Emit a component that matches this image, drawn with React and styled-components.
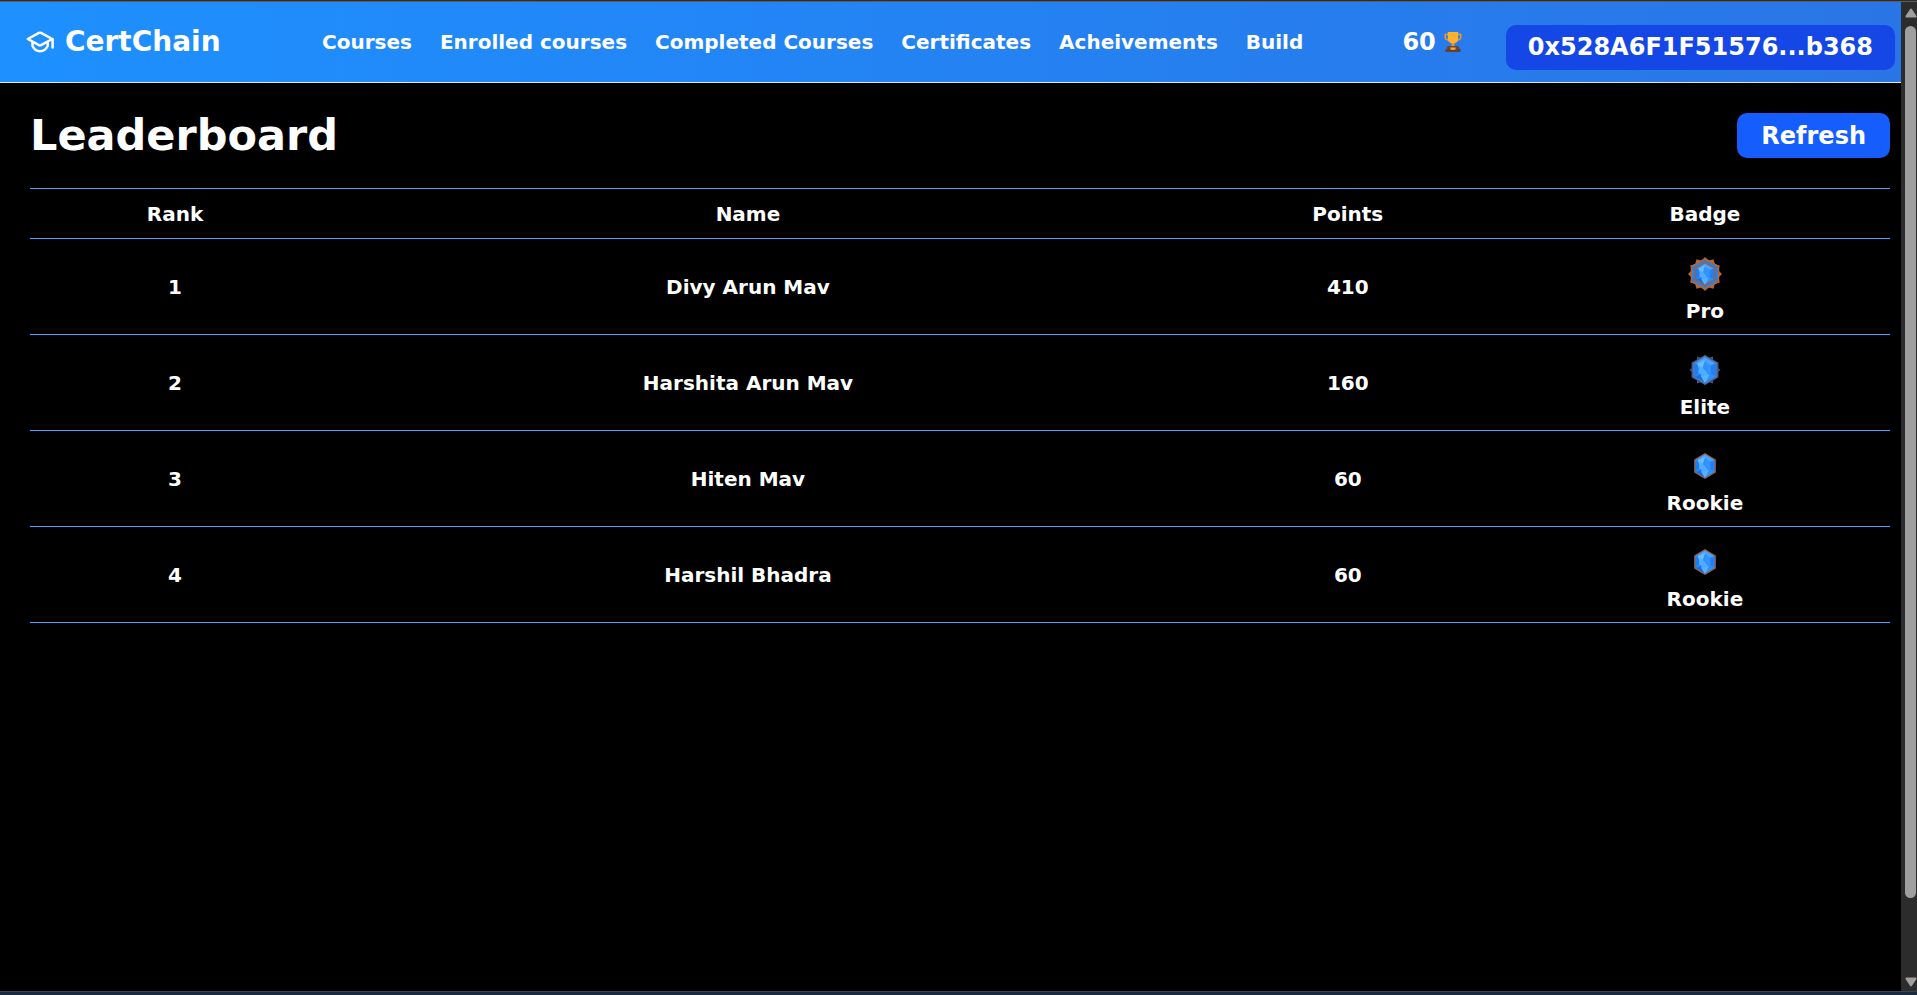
import React from "react";
import styled, { createGlobalStyle } from "styled-components";

const Global = createGlobalStyle`
  * { box-sizing: border-box; }
  html, body, #root { height: 100%; }
  body {
    margin: 0;
    background: #000;
    color: #fff;
    overflow: hidden;
    font-family: "DejaVu Sans", Verdana, sans-serif;
    font-weight: 700;
    font-size: 20px;
    line-height: 24px;
  }
`;

const Frame = styled.div`
  height: 100vh;
  display: flex;
  flex-direction: column;
  border-top: 1px solid #2d2d2d;
`;

const Viewport = styled.div`
  flex: 1;
  min-height: 0;
  display: flex;
  border-top: 1px solid #5c5c5c;
`;

const Page = styled.div`
  flex: 1;
  min-width: 0;
  overflow: hidden;
`;

const Header = styled.header`
  display: flex;
  align-items: center;
  height: 81px;
  padding: 0 6px 0 26px;
  background: linear-gradient(to right, #1e90ff, #2a75e6);
  border-bottom: 1px solid #e5e7eb;
`;

const Brand = styled.a`
  display: flex;
  align-items: center;
  gap: 10px;
  width: 296px;
  color: #fff;
  font-size: 28px;
  line-height: 32px;
  text-decoration: none;
`;

const Nav = styled.nav`
  display: flex;
  gap: 28px;
  white-space: nowrap;
`;

const NavLink = styled.a`
  color: #fff;
  text-decoration: none;
`;

const Account = styled.div`
  display: flex;
  align-items: center;
  margin-left: auto;
`;

const Score = styled.span`
  display: flex;
  align-items: center;
  gap: 8px;
  margin-right: 44px;
  font-size: 24px;
`;

const Button = styled.button`
  height: 45px;
  padding: 0 ${(p) => (p.$dark ? "22px" : "24px")};
  border: 0;
  border-radius: 10px;
  background: ${(p) => (p.$dark ? "#1447e6" : "#155dfc")};
  margin-top: ${(p) => (p.$dark ? "10px" : "0")};
  color: #fff;
  font: inherit;
  font-size: 24px;
  cursor: pointer;
`;

const Main = styled.main`
  padding: 30px 11px 0 30px;
`;

const TitleRow = styled.div`
  display: flex;
  align-items: center;
  justify-content: space-between;
  margin-bottom: 30px;
`;

const Title = styled.h1`
  margin: 0;
  font-size: 43px;
  line-height: 45px;
`;

const Table = styled.table`
  width: 100%;
  table-layout: fixed;
  border-collapse: collapse;
  text-align: center;
`;

const Col = styled.col`
  width: ${(p) => p.$share}%;
`;

const Row = styled.tr`
  height: ${(p) => (p.$head ? 50 : 96)}px;
  border-top: 1px solid #51a2ff;
  border-bottom: 1px solid #51a2ff;
`;

const Heading = styled.th`
  padding: 0;
`;

const Cell = styled.td`
  padding: 0;
`;

const BadgeBox = styled.div`
  display: flex;
  flex-direction: column;
  align-items: center;
  gap: 2px;
`;

const Rail = styled.div`
  display: flex;
  flex-direction: column;
  align-items: center;
  gap: 8px;
  width: 16px;
  padding: 6px 1px 4px 4px;
  background: #2c2c2c;
`;

const Track = styled.div`
  flex: 1;
  width: 11px;
`;

const Thumb = styled.div`
  height: 92.5%;
  border-radius: 6px;
  background: #9f9f9f;
`;

const BottomEdge = styled.div`
  height: 4px;
  background: #1b2a3f;
  border-top: 1px solid #3c4450;
`;

const CapIcon = () => (
  <svg width="29" height="24" viewBox="0 0 29 24" fill="none" stroke="#fff" strokeWidth="2.5" strokeLinejoin="round" strokeLinecap="round" aria-hidden="true">
    <path d="M1.8 9 13 2.9Q14 2.4 15 2.9L26.4 9 15 15.2Q14 15.7 13 15.2Z" />
    <path d="M6.5 12.3V16Q9 21.2 14 21.2T21.7 16V12.3" />
    <path d="M26.6 9.5V17.5" />
  </svg>
);

const Trophy = () => (
  <svg width="18" height="22" viewBox="0 0 18 22" aria-hidden="true">
    <path d="M4 3.5H1.2V6Q1.2 9 5 9.2M14 3.5H16.8V6Q16.8 9 13 9.2" fill="none" stroke="#f29a1f" strokeWidth="1.5" />
    <path d="M3.8 1H14.2V7Q14.2 11.6 10.2 12.4V16H7.8V12.4Q3.8 11.6 3.8 7Z" fill="#ffb02e" />
    <path d="M7.8 12.2H10.2V15H7.8Z" fill="#ee9320" />
    <path d="M3.5 15H14.5L15.5 18H2.5Z" fill="#6d4534" />
    <path d="M1.5 18H16.5V21H1.5Z" fill="#63402f" />
    <path d="M6.5 16.5H11.5V18.8H6.5Z" fill="#f5ad32" />
  </svg>
);

const gemScale = { Pro: 0.95, Elite: 1.12, Rookie: 1.02 };

const Gem = ({ level }) => (
  <g transform={`translate(23 23) scale(${gemScale[level]}) translate(-22 -22)`}>
    <path d="M22 10 32 16V28L22 34 12 28V16Z" fill="#2d90fb" />
    <path d="M22 10 32 16 27 18 20 14 12 16Z" fill="#48a4ff" />
    <path d="M12 16 17 18 16 25 12 28Z" fill="#1f7df2" />
    <path d="M15 16 22 13 20 20 17 22Z" fill="#68bcff" />
    <path d="M17 18 21 21 25 26 20 27 16 24Z" fill="#4facff" />
    <path d="M27 18 32 16V28L27 25Z" fill="#237ff2" />
    <path d="M22 14 27 18 27 25 23 22Z" fill="#3493ff" />
    <path d="M12 28 18 26 22 34Z" fill="#1b6fe6" />
    <path d="M18 27 26 26 22 34Z" fill="#55b2ff" />
    <path
      d="M22 10 32 16V28L22 34 12 28V16Z"
      fill="none"
      stroke={level === "Elite" ? "#4f78b8" : "#94604d"}
      strokeWidth={level === "Pro" ? 1.5 : 1.2}
    />
  </g>
);

const spikes = Array.from({ length: 12 }, (_, i) => i * 30);

const BadgeArt = ({ level }) => (
  <svg width="46" height="46" viewBox="0 0 46 46" role="img" aria-label={`${level} badge`}>
    {level !== "Rookie" && (
      <g fill={level === "Pro" ? "#b4673d" : "#49618f"}>
        {spikes.map((a) => (
          <path key={a} transform={`rotate(${a} 23 23)`} d={level === "Pro" ? "M19 10 23 6 27 10Z" : "M21 10 23 7.5 25 10Z"} />
        ))}
      </g>
    )}
    {level === "Pro" && (
      <g>
        <path d="M23 8 36.5 15.5V30.5L23 38 9.5 30.5V15.5Z" fill="#2482ed" stroke="#b4673d" strokeWidth="1.5" />
        <path d="M23 8V38M10 16 36 30M36 16 10 30" stroke="#98603e" strokeWidth="1" />
      </g>
    )}
    {level === "Elite" && (
      <path d="M23 8.5 36 15.8V30.2L23 37.5 10 30.2V15.8Z" fill="#536a98" stroke="#3c4f7c" />
    )}
    <Gem level={level} />
  </svg>
);

const ArrowUp = () => (
  <svg width="12" height="10" viewBox="0 0 12 10" aria-hidden="true">
    <path d="M6 0.5Q6.6 0.5 7 1.2L11.5 8Q12 9.5 10.5 9.5H1.5Q0 9.5 0.5 8L5 1.2Q5.4 0.5 6 0.5Z" fill="#9f9f9f" />
  </svg>
);

const ArrowDown = () => (
  <svg width="12" height="10" viewBox="0 0 12 10" aria-hidden="true">
    <path d="M6 9.5Q6.6 9.5 7 8.8L11.5 2Q12 0.5 10.5 0.5H1.5Q0 0.5 0.5 2L5 8.8Q5.4 9.5 6 9.5Z" fill="#9f9f9f" />
  </svg>
);

const links = ["Courses", "Enrolled courses", "Completed Courses", "Certificates", "Acheivements", "Build"];

const columns = [
  ["Rank", 15.6],
  ["Name", 46],
  ["Points", 18.5],
  ["Badge", 19.9],
];

const players = [
  { name: "Divy Arun Mav", points: 410, badge: "Pro" },
  { name: "Harshita Arun Mav", points: 160, badge: "Elite" },
  { name: "Hiten Mav", points: 60, badge: "Rookie" },
  { name: "Harshil Bhadra", points: 60, badge: "Rookie" },
];

export default function App() {
  return (
    <Frame>
      <Global />
      <Viewport>
        <Page>
          <Header>
            <Brand href="#home">
              <CapIcon />
              CertChain
            </Brand>
            <Nav>
              {links.map((l) => (
                <NavLink key={l} href="#nav">{l}</NavLink>
              ))}
            </Nav>
            <Account>
              <Score>
                60
                <Trophy />
              </Score>
              <Button $dark>0x528A6F1F51576...b368</Button>
            </Account>
          </Header>
          <Main>
            <TitleRow>
              <Title>Leaderboard</Title>
              <Button>Refresh</Button>
            </TitleRow>
            <Table>
              <colgroup>
                {columns.map(([name, share]) => (
                  <Col key={name} $share={share} />
                ))}
              </colgroup>
              <thead>
                <Row $head>
                  {columns.map(([name]) => (
                    <Heading key={name} scope="col">{name}</Heading>
                  ))}
                </Row>
              </thead>
              <tbody>
                {players.map((p, i) => (
                  <Row key={p.name}>
                    <Cell>{i + 1}</Cell>
                    <Cell>{p.name}</Cell>
                    <Cell>{p.points}</Cell>
                    <Cell>
                      <BadgeBox>
                        <BadgeArt level={p.badge} />
                        {p.badge}
                      </BadgeBox>
                    </Cell>
                  </Row>
                ))}
              </tbody>
            </Table>
          </Main>
        </Page>
        <Rail aria-hidden="true">
          <ArrowUp />
          <Track>
            <Thumb />
          </Track>
          <ArrowDown />
        </Rail>
      </Viewport>
      <BottomEdge />
    </Frame>
  );
}
